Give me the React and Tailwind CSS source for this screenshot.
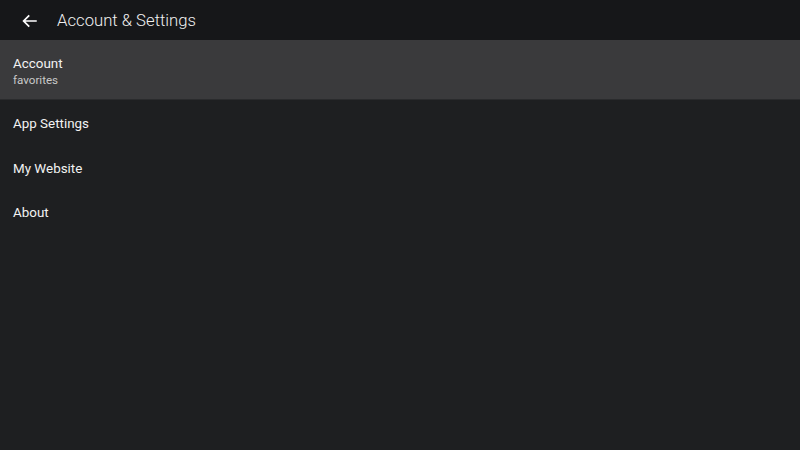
import React from 'react';

const items = ['App Settings', 'My Website', 'About'];

const App = () => {
    return (
        <div className="w-[800px] h-[450px] bg-[#1e1f21] flex flex-col font-['Roboto',sans-serif] text-white overflow-hidden">
            <header className="h-[40px] bg-[#161719] flex items-center shrink-0 pt-[1px]">
                <button className="w-[60px] h-[40px] flex items-center justify-center">
                    <svg width="18" height="18" viewBox="0 0 24 24" fill="none" stroke="currentColor" strokeWidth="2.3">
                        <path d="M21 12H4M11 4.5L3.5 12 11 19.5" />
                    </svg>
                </button>
                <h1 className="text-[16.7px] font-light text-[#f0f0f0] -ml-[3px]">Account &amp; Settings</h1>
            </header>
            <div className="h-[60px] bg-[#3a3a3c] border-b border-[#2a2b2d] flex flex-col justify-center px-[13px] shrink-0 pt-[2px]">
                <div className="text-[13.4px] leading-[19px] text-[#f2f2f2]">Account</div>
                <div className="text-[11.6px] leading-[15px] text-[#c9c9c9]">favorites</div>
            </div>
            <div className="flex flex-col pt-[2px]">
                {items.map((item) => (
                    <div key={item} className="h-[44.5px] flex items-center px-[13px] text-[13.4px] text-[#f2f2f2]">
                        {item}
                    </div>
                ))}
            </div>
        </div>
    );
};

export default App;
